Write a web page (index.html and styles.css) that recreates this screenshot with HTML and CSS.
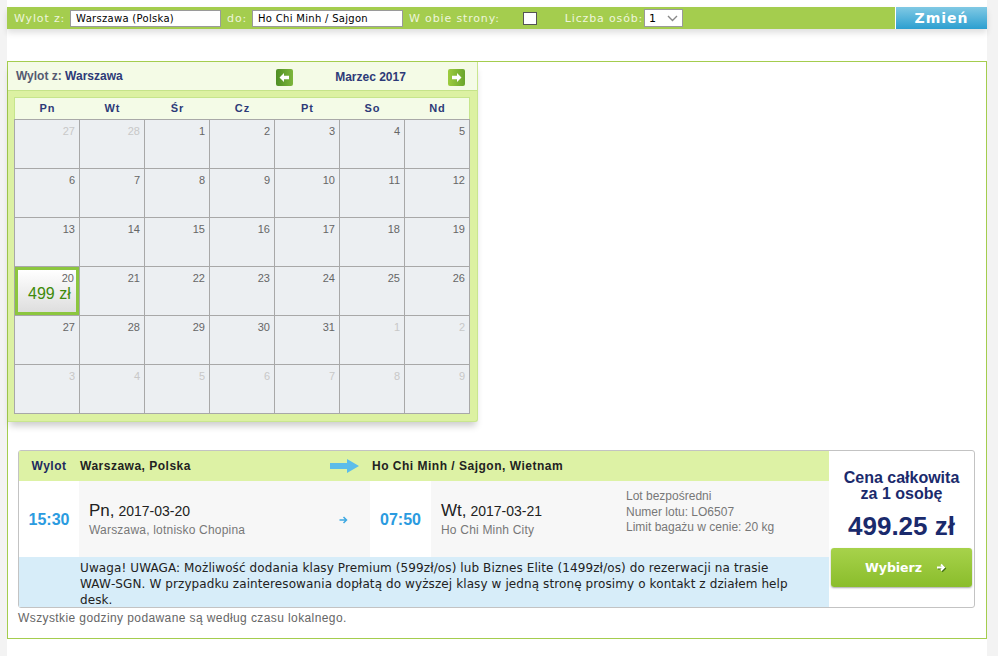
FILE: index.html
```html
<!DOCTYPE html>
<html lang="pl">
<head>
    <meta charset="UTF-8">
    <title>Wyszukiwarka lotów</title>
    <link rel="stylesheet" href="styles.css">
</head>
<body>
<div class="page">
    <div class="searchbar">
        <div class="search-fields">
            <span class="lbl">Wylot z:</span>
            <span class="field">Warszawa (Polska)</span>
            <span class="lbl">do:</span>
            <span class="field">Ho Chi Minh / Sajgon</span>
            <span class="lbl">W obie strony:</span>
            <span class="check"></span>
            <span class="lbl lbl-people">Liczba osób:</span>
            <span class="select">1
                <svg width="11" height="7" viewBox="0 0 11 7"><path d="M1 1 L5.5 5.5 L10 1" fill="none" stroke="#888" stroke-width="1.4"/></svg>
            </span>
        </div>
        <button class="btn-change">Zmień</button>
    </div>

    <div class="results">
        <div class="calendar">
            <div class="cal-head">
                <div class="cal-from">Wylot z: <b>Warszawa</b></div>
                <div class="cal-nav">
                    <span class="cal-arrow prev"><svg width="17" height="17" viewBox="0 0 17 17"><path d="M3.5 8.5 L8 4 V6.8 H13 V10.2 H8 V13 Z" fill="#fff"/></svg></span>
                    <span class="cal-month">Marzec 2017</span>
                    <span class="cal-arrow next"><svg width="17" height="17" viewBox="0 0 17 17"><path d="M13.5 8.5 L9 4 V6.8 H4 V10.2 H9 V13 Z" fill="#fff"/></svg></span>
                </div>
            </div>
            <div class="cal-days">
                <span>Pn</span><span>Wt</span><span>Śr</span><span>Cz</span><span>Pt</span><span>So</span><span>Nd</span>
            </div>
            <div class="cal-grid">
                <div class="day other">27</div><div class="day other">28</div><div class="day">1</div><div class="day">2</div><div class="day">3</div><div class="day">4</div><div class="day">5</div>
                <div class="day">6</div><div class="day">7</div><div class="day">8</div><div class="day">9</div><div class="day">10</div><div class="day">11</div><div class="day">12</div>
                <div class="day">13</div><div class="day">14</div><div class="day">15</div><div class="day">16</div><div class="day">17</div><div class="day">18</div><div class="day">19</div>
                <div class="day selected">20<span class="price">499 zł</span></div><div class="day">21</div><div class="day">22</div><div class="day">23</div><div class="day">24</div><div class="day">25</div><div class="day">26</div>
                <div class="day">27</div><div class="day">28</div><div class="day">29</div><div class="day">30</div><div class="day">31</div><div class="day other">1</div><div class="day other">2</div>
                <div class="day other">3</div><div class="day other">4</div><div class="day other">5</div><div class="day other">6</div><div class="day other">7</div><div class="day other">8</div><div class="day other">9</div>
            </div>
        </div>

        <div class="flight">
            <div class="flight-main">
                <div class="flight-head">
                    <div class="fh-label">Wylot</div>
                    <div class="fh-from">
                        <span>Warszawa, Polska</span>
                        <svg width="29" height="14" viewBox="0 0 29 14"><path d="M0 4 H17 V0 L29 7 L17 14 V10 H0 Z" fill="#5cbdea"/></svg>
                    </div>
                    <div class="fh-to">Ho Chi Minh / Sajgon, Wietnam</div>
                </div>
                <div class="flight-row">
                    <div class="time">15:30</div>
                    <div class="leg leg-from">
                        <div>
                            <div class="date"><span class="dow">Pn,</span> 2017-03-20</div>
                            <div class="place">Warszawa, lotnisko Chopina</div>
                        </div>
                        <svg class="leg-arrow" width="9" height="8" viewBox="0 0 9 8"><path d="M0.5 4 H7.5 M4.5 1 L7.5 4 L4.5 7" fill="none" stroke="#3fa9e2" stroke-width="1.5"/></svg>
                    </div>
                    <div class="time">07:50</div>
                    <div class="leg leg-to">
                        <div class="leg-date">
                            <div class="date"><span class="dow">Wt,</span> 2017-03-21</div>
                            <div class="place">Ho Chi Minh City</div>
                        </div>
                        <div class="info">
                            Lot bezpośredni<br>
                            Numer lotu: LO6507<br>
                            Limit bagażu w cenie: 20 kg
                        </div>
                    </div>
                </div>
                <div class="notice">Uwaga! UWAGA: Możliwość dodania klasy Premium (599zł/os) lub Biznes Elite (1499zł/os) do rezerwacji na trasie WAW&#8209;SGN. W przypadku zainteresowania dopłatą do wyższej klasy w jedną stronę prosimy o kontakt z działem help desk.</div>
            </div>
            <div class="flight-price">
                <div class="price-label">Cena całkowita<br>za 1 osobę</div>
                <div class="price-total">499.25 zł</div>
                <button class="btn-select">Wybierz
                    <svg width="10" height="9" viewBox="0 0 10 9"><path d="M1 4.5 H8 M5 1.5 L8 4.5 L5 7.5" fill="none" stroke="#fff" stroke-width="1.8"/></svg>
                </button>
            </div>
        </div>
        <p class="note">Wszystkie godziny podawane są według czasu lokalnego.</p>
    </div>
</div>
</body>
</html>
```

FILE: styles.css
```css
body {
    margin: 0;
    background-color: #f3f3f3;
    font-family: "Liberation Sans", Arial, sans-serif;
    color: #333;
}

.page {
    width: 980px;
    min-height: 656px;
    margin-left: 7px;
    padding-top: 7px;
    box-sizing: border-box;
    background-color: #fff;
}

/* top search bar */
.searchbar {
    display: flex;
    height: 22px;
    box-shadow: 0 4px 6px rgba(0, 0, 0, 0.12);
}
.search-fields {
    flex: 1;
    display: flex;
    align-items: center;
    padding-left: 7px;
    background-color: #a4cd4e;
    font-family: "DejaVu Sans", Verdana, sans-serif;
    font-size: 11px;
    letter-spacing: 0.85px;
    color: #eef5dc;
}
.lbl {
    margin-right: 5px;
}
.field {
    width: 151px;
    height: 17px;
    box-sizing: border-box;
    margin-right: 6px;
    padding-left: 5px;
    border: 1px solid #9a9a9a;
    background-color: #fff;
    color: #000;
    font-size: 10px;
    line-height: 15px;
    letter-spacing: 0.3px;
}
.check {
    width: 14px;
    height: 13px;
    box-sizing: border-box;
    margin-left: 18px;
    border: 1px solid #555;
    background-color: #fff;
}
.lbl-people {
    margin-left: 28px;
    margin-right: 1px;
}
.select {
    display: flex;
    align-items: center;
    justify-content: space-between;
    width: 39px;
    height: 18px;
    box-sizing: border-box;
    padding: 0 4px 0 4px;
    border: 1px solid #9a9a9a;
    background-color: #fff;
    color: #000;
    font-size: 11px;
}
.btn-change {
    width: 91px;
    height: 22px;
    margin-left: 1px;
    border: none;
    padding: 0;
    background: linear-gradient(#80c9e4, #2c9fd0);
    color: #fff;
    font-family: "DejaVu Sans", Verdana, sans-serif;
    font-weight: bold;
    font-size: 14px;
    letter-spacing: 1px;
}

/* results area */
.results {
    height: 578px;
    margin-top: 32px;
    box-sizing: border-box;
    border: 1px solid #a4cd4e;
}

.calendar {
    width: 470px;
    box-sizing: border-box;
    padding: 0 7px 7px 6px;
    background-color: #dcf1a2;
    border-right: 1px solid #c9e68f;
    border-bottom: 1px solid #c9e68f;
    border-radius: 0 0 3px 0;
    box-shadow: 0 6px 7px -2px rgba(0, 0, 0, 0.2);
}
.cal-head {
    display: flex;
    align-items: center;
    justify-content: space-between;
    height: 28px;
    margin: 0 -7px 6px -6px;
    padding: 0 12px 0 8px;
    background-color: #f4fbe6;
    border-bottom: 1px solid #c5e38a;
    font-size: 12px;
    font-weight: bold;
}
.cal-from {
    color: #555a70;
}
.cal-from b {
    color: #2d3a78;
}
.cal-nav {
    display: flex;
    align-items: center;
    justify-content: space-between;
    width: 189px;
    padding-top: 2px;
}
.cal-month {
    color: #2d3a78;
}
.cal-arrow {
    display: block;
    width: 17px;
    height: 17px;
    border-radius: 2px;
}
.cal-arrow svg {
    display: block;
}
.cal-arrow.prev {
    background: linear-gradient(to right, #4f8e24, #7db63c);
}
.cal-arrow.next {
    background: linear-gradient(to right, #9dcc3e, #6aa52c);
}

.cal-days {
    display: grid;
    grid-template-columns: repeat(7, 65px);
    width: 456px;
    height: 22px;
    box-sizing: border-box;
    border: 1px solid #c6e58c;
    border-bottom: none;
    background-color: #f4fbe7;
    font-size: 11px;
    font-weight: bold;
    letter-spacing: 1px;
    color: #2d3a78;
    line-height: 21px;
    text-align: center;
}
.cal-grid {
    display: grid;
    grid-template-columns: repeat(7, 64px);
    grid-auto-rows: 48px;
    gap: 1px;
    width: 456px;
    box-sizing: border-box;
    padding: 1px;
    background-color: #a8a8a8;
}
.day {
    padding: 5px 4px 0 0;
    background-color: #eceff2;
    font-size: 11px;
    color: #666;
    text-align: right;
}
.day.other {
    color: #c8c8c8;
}
.day.selected {
    display: flex;
    flex-direction: column;
    align-items: flex-end;
    padding: 2px 2px 0 0;
    border: 3px solid #8cc63f;
    background: linear-gradient(#fff, #dedede);
}
.day.selected .price {
    align-self: flex-start;
    margin: 1px 0 0 10px;
    font-size: 16px;
    color: #3e8a0a;
}

/* flight offer */
.flight {
    display: flex;
    width: 957px;
    margin: 28px 0 0 10px;
    box-sizing: border-box;
    border: 1px solid #c3c3c3;
    border-radius: 3px;
}
.flight-main {
    width: 811px;
}
.flight-head {
    display: grid;
    grid-template-columns: 60px 291px 1fr;
    align-items: center;
    height: 30px;
    background-color: #ddf2a5;
    font-size: 12px;
    font-weight: bold;
    letter-spacing: 0.5px;
    color: #222;
}
.fh-label {
    color: #1c2a5e;
    text-align: center;
}
.fh-from {
    display: flex;
    align-items: center;
    justify-content: space-between;
    padding: 0 11px 0 1px;
}
.fh-to {
    padding-left: 2px;
}

.flight-row {
    display: grid;
    grid-template-columns: 60px 291px 61px 1fr;
    height: 76px;
}
.time {
    display: flex;
    align-items: center;
    justify-content: center;
    padding-top: 1px;
    font-size: 16px;
    font-weight: bold;
    color: #2b9be0;
}
.leg {
    display: flex;
    align-items: center;
    padding-left: 10px;
    background-color: #f7f7f7;
}
.leg-from {
    justify-content: space-between;
    padding-right: 22px;
}
.leg-arrow {
    margin-top: 1px;
}
.date {
    font-size: 14px;
    color: #222;
}
.dow {
    font-size: 17px;
}
.place {
    margin-top: 2px;
    font-size: 12px;
    letter-spacing: 0.2px;
    color: #777;
}
.leg-to {
    align-items: stretch;
}
.leg-date {
    display: flex;
    flex-direction: column;
    justify-content: center;
    width: 185px;
}
.info {
    padding-top: 8px;
    font-size: 12px;
    line-height: 15.5px;
    color: #777;
}
.notice {
    height: 50px;
    box-sizing: border-box;
    padding: 3px 22px 0 61px;
    background-color: #d7edf9;
    font-family: "DejaVu Sans", Verdana, sans-serif;
    font-size: 12px;
    line-height: 16px;
    letter-spacing: 0.1px;
    color: #222;
}

.flight-price {
    flex: 1;
    display: flex;
    flex-direction: column;
    align-items: center;
    padding: 19px 2px 0 2px;
    color: #1a2a6c;
    font-weight: bold;
    text-align: center;
}
.price-label {
    font-size: 16px;
    line-height: 16px;
}
.price-total {
    margin-top: 9px;
    font-size: 26px;
    line-height: 30px;
}
.btn-select {
    display: flex;
    align-items: center;
    justify-content: center;
    gap: 14px;
    width: 141px;
    height: 39px;
    margin-top: 7px;
    padding: 0 0 0 8px;
    border: none;
    border-radius: 3px;
    background: linear-gradient(#a7d24b, #8abd2b);
    box-shadow: 0 1px 2px rgba(0, 0, 0, 0.35);
    color: #fff;
    font-family: "DejaVu Sans", Verdana, sans-serif;
    font-weight: bold;
    font-size: 12.5px;
}
.btn-select svg {
    filter: drop-shadow(1px 1px 0 #3d6b12);
}

.note {
    margin: 3px 0 0 10px;
    font-size: 12px;
    letter-spacing: 0.4px;
    color: #666;
}
```
